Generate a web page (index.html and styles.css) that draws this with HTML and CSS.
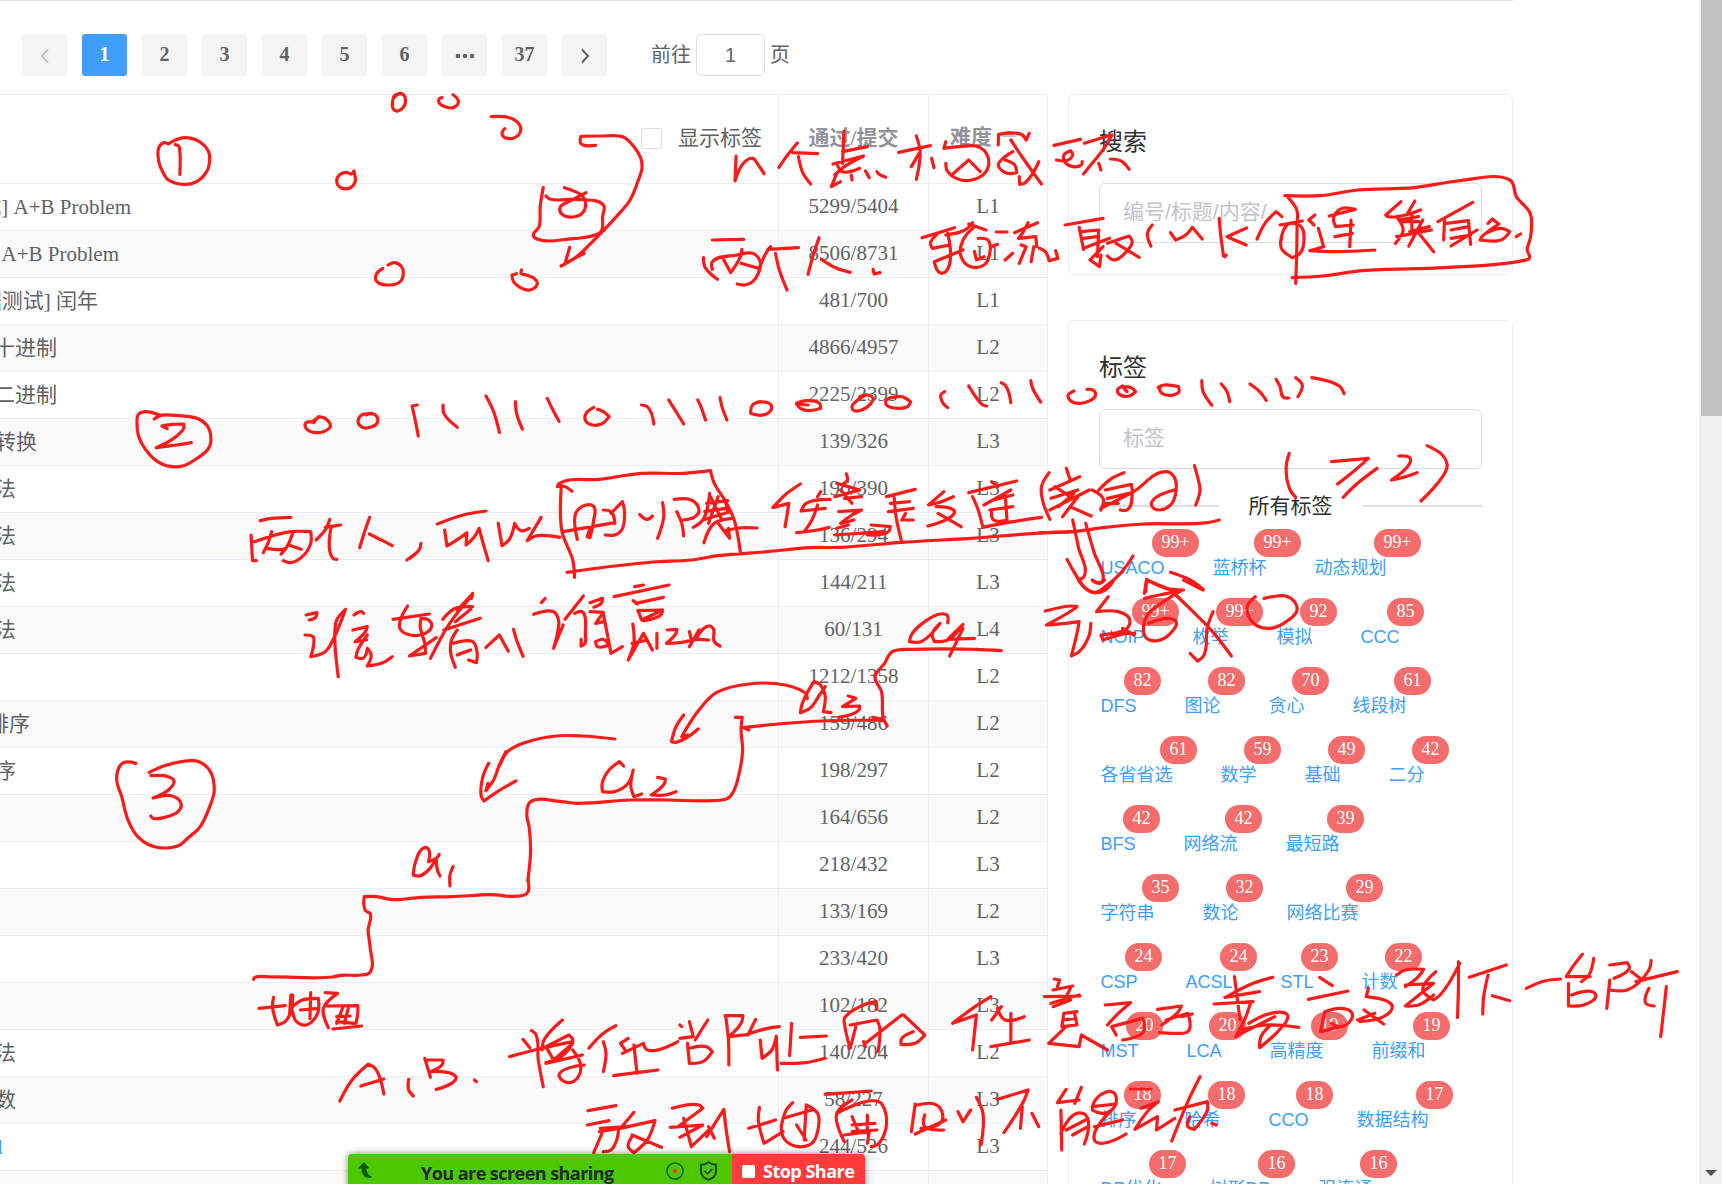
FILE: index.html
```html
<!DOCTYPE html>
<html lang="zh-CN">
<head>
<meta charset="utf-8">
<title>题库</title>
<link rel="stylesheet" href="styles.css">
</head>
<body>
<div class="page">
  <div class="content">
    <nav class="pager">
      <button class="pg off"><svg width="12" height="18" viewBox="0 0 12 18"><path d="M9 2.500L3 9l6 6.500"/></svg></button>
      <button class="pg on">1</button><button class="pg">2</button><button class="pg">3</button><button class="pg">4</button><button class="pg">5</button><button class="pg">6</button>
      <button class="pg"><svg width="20" height="6" viewBox="0 0 20 6"><g class="dots"><circle cx="3" cy="3" r="2.300"/><circle cx="10" cy="3" r="2.300"/><circle cx="17" cy="3" r="2.300"/></g></svg></button>
      <button class="pg">37</button>
      <button class="pg"><svg width="12" height="18" viewBox="0 0 12 18"><path d="M3 2.500L9 9l-6 6.500"/></svg></button>
      <span class="jump">前往<span class="jump-box">1</span>页</span>
    </nav>
    <div class="columns">
      <main class="table">
        <div class="row head"><div class="c1"><span class="check"></span>显示标签</div><div class="c2">通过/提交</div><div class="c3">难度<i class="caret"></i></div></div>
        <div class="row"><div class="c1"><span class="t e131">试] A+B Problem</span></div><div class="c2">5299/5404</div><div class="c3">L1</div></div>
        <div class="row"><div class="c1"><span class="t e119">A+B Problem</span></div><div class="c2">8506/8731</div><div class="c3">L1</div></div>
        <div class="row"><div class="c1"><span class="t e98">据测试] 闰年</span></div><div class="c2">481/700</div><div class="c3">L1</div></div>
        <div class="row"><div class="c1"><span class="t e57">十进制</span></div><div class="c2">4866/4957</div><div class="c3">L2</div></div>
        <div class="row"><div class="c1"><span class="t e57">二进制</span></div><div class="c2">2225/2399</div><div class="c3">L2</div></div>
        <div class="row"><div class="c1"><span class="t e37">转换</span></div><div class="c2">139/326</div><div class="c3">L3</div></div>
        <div class="row"><div class="c1"><span class="t e16">法</span></div><div class="c2">196/390</div><div class="c3">L3</div></div>
        <div class="row"><div class="c1"><span class="t e16">法</span></div><div class="c2">136/294</div><div class="c3">L3</div></div>
        <div class="row"><div class="c1"><span class="t e16">法</span></div><div class="c2">144/211</div><div class="c3">L3</div></div>
        <div class="row"><div class="c1"><span class="t e16">法</span></div><div class="c2">60/131</div><div class="c3">L4</div></div>
        <div class="row"><div class="c1"></div><div class="c2">1212/1358</div><div class="c3">L2</div></div>
        <div class="row"><div class="c1"><span class="t e30">排序</span></div><div class="c2">159/486</div><div class="c3">L2</div></div>
        <div class="row"><div class="c1"><span class="t e16">序</span></div><div class="c2">198/297</div><div class="c3">L2</div></div>
        <div class="row"><div class="c1"></div><div class="c2">164/656</div><div class="c3">L2</div></div>
        <div class="row"><div class="c1"></div><div class="c2">218/432</div><div class="c3">L3</div></div>
        <div class="row"><div class="c1"></div><div class="c2">133/169</div><div class="c3">L2</div></div>
        <div class="row"><div class="c1"></div><div class="c2">233/420</div><div class="c3">L3</div></div>
        <div class="row"><div class="c1"></div><div class="c2">102/182</div><div class="c3">L3</div></div>
        <div class="row"><div class="c1"><span class="t e16">法</span></div><div class="c2">140/204</div><div class="c3">L2</div></div>
        <div class="row"><div class="c1"><span class="t e16">数</span></div><div class="c2">58/227</div><div class="c3">L3</div></div>
        <div class="row"><div class="c1"><span class="t e3 link">l</span></div><div class="c2">244/526</div><div class="c3">L3</div></div>
        <div class="row"><div class="c1"></div><div class="c2"></div><div class="c3"></div></div>
      </main>
      <aside class="side">
        <section class="card search"><h2>搜索</h2><div class="field">编号/标题/内容/</div></section>
        <section class="card tags"><h2>标签</h2><div class="field">标签</div>
          <div class="divider"><span>所有标签</span></div>
          <div class="tagrow"><a>USACO<b>99+</b></a><a>蓝桥杯<b>99+</b></a><a>动态规划<b>99+</b></a></div>
          <div class="tagrow"><a>NOIP<b>99+</b></a><a>枚举<b>99+</b></a><a>模拟<b>92</b></a><a>CCC<b>85</b></a></div>
          <div class="tagrow"><a>DFS<b>82</b></a><a>图论<b>82</b></a><a>贪心<b>70</b></a><a>线段树<b>61</b></a></div>
          <div class="tagrow"><a>各省省选<b>61</b></a><a>数学<b>59</b></a><a>基础<b>49</b></a><a>二分<b>42</b></a></div>
          <div class="tagrow"><a>BFS<b>42</b></a><a>网络流<b>42</b></a><a>最短路<b>39</b></a></div>
          <div class="tagrow"><a>字符串<b>35</b></a><a>数论<b>32</b></a><a>网络比赛<b>29</b></a></div>
          <div class="tagrow"><a>CSP<b>24</b></a><a>ACSL<b>24</b></a><a>STL<b>23</b></a><a>计数<b>22</b></a></div>
          <div class="tagrow"><a>MST<b>20</b></a><a>LCA<b>20</b></a><a>高精度<b>19</b></a><a>前缀和<b>19</b></a></div>
          <div class="tagrow"><a>排序<b>18</b></a><a>哈希<b>18</b></a><a>CCO<b>18</b></a><a>数据结构<b>17</b></a></div>
          <div class="tagrow"><a>DP优化<b>17</b></a><a>树形DP<b>16</b></a><a>强连通<b>16</b></a></div>
        </section>
      </aside>
    </div>
  </div>
  <div class="scroll"><div class="thumb"></div><i class="down"></i></div>
</div>

<!-- freehand pen strokes over the page, one group per canvas tile -->
<svg class="ink" width="1722" height="1184" viewBox="0 0 1722 1184">
<g transform="scale(.38265 .33333)">
<path d="M440,432 430,428 416,440 415,485 425,515 440,540 480,553 512,546 540,515 548,480 545,455 520,424 483,413 460,419 440,432M458,434 467,438 470,455 470,523"/>
<path d="M1045,280 1030,288 1026,305 1028,328 1040,333 1054,322 1060,300 1055,285 1045,280 1030,292M1155,293 1147,298 1150,312 1165,321 1178,324 1195,315 1197,300 1184,284M1284,350 1318,350 1342,358 1360,380 1355,405 1332,416 1314,408 1313,395 1319,386"/>
<path d="M925,515 928,545 914,564 892,564 880,545 888,524 905,517 918,522 925,513M1014,795 1030,788 1048,798 1054,822 1046,845 1018,855 985,845 984,822 1000,805M1350,821 1338,825 1342,845 1370,868 1385,870 1404,852 1396,835 1375,825 1362,820 1363,810"/>
</g>
<g transform="translate(500 0) scale(.38265 .33333)">
<path d="M250,436 220,436 211,430 211,409 262,408 322,411 350,440 368,475 371,505 360,545 340,600 300,655 250,715 200,770 160,798M182,742 170,790 220,760"/>
<path d="M113,563 105,620 102,680 87,705 93,715 190,716 240,708 264,695 268,650 270,615 200,598 130,597 120,588M168,563 210,583 222,600 218,635 190,651 160,640 158,620 180,605 225,578"/>
<path d="M617,468 614,543 640,485 660,475 675,495 690,521M777,429 745,475 729,502M765,458 830,461M780,470 792,520 812,552"/>
<path d="M899,393 895,490M895,455 960,440M870,492 950,468 900,500 875,525M880,490 895,515 940,505M880,520 866,560 890,545M918,525 920,540M955,513 965,533M985,515 990,522 1008,532"/>
<path d="M1088,408 1098,455 1088,538M1042,457 1125,437M1095,460 1075,500M1128,475 1134,503M1165,425 1160,445 1200,440 1250,440 1275,470 1270,515 1240,538 1205,540 1170,515 1165,490M1185,520 1225,480 1255,515"/>
<path d="M1383,400 1375,420 1362,403 1303,403 1302,435M1340,455 1310,480 1302,495 1325,520 1350,518 1345,495 1320,480M1335,420 1370,480 1415,552M1408,485 1370,550 1358,553 1357,530"/>
<path d="M555,720 637,718M532,773 535,800 568,838M555,808 555,785 620,765 660,760 680,785 675,820 660,845 640,855 620,852M585,780 603,818 630,765 632,748M630,790 675,805"/>
<path d="M707,740 690,770 678,805M700,748 780,743M720,760 730,810 750,870M834,713 820,760 805,823M840,778 880,805 915,817M975,808 978,822 993,818"/>
<path d="M1103,713 1188,683M1145,700 1125,730 1130,745 1175,735M1170,700 1165,815 1150,818 1135,785 1210,750M1165,705 1215,690 1235,668M1225,672 1270,690M1240,680 1210,720 1205,770 1230,800 1265,795 1280,760 1275,720 1250,715M1240,755 1245,780 1265,770"/>
<path d="M1297,696 1325,696M1283,740 1300,733M1320,780 1340,760M1345,698 1405,668M1380,668 1365,700 1355,715 1400,710 1403,740M1362,735 1375,740 1357,790M1395,740 1388,785M1410,745 1425,755 1435,782 1458,775 1452,752"/>
</g>
<g transform="translate(1040 0) scale(.43495 .33333)">
<path d="M32,436 93,418M38,480 60,482 75,465 70,452 55,465 60,490 75,500 95,495 97,485M102,430 150,410 165,405 150,440 120,490 100,522M135,490 140,510M162,477 185,482 205,508"/>
<path d="M58,675 145,655M90,682 100,748M95,695 135,690 132,770M100,715 130,710M100,745 160,715M145,740 115,780 137,800 140,765M155,730 205,708 212,725 195,760 170,780 155,768M175,730 228,772"/>
<path d="M258,675 247,700 255,738M300,698 312,720 335,705 350,682 373,717M412,655 415,700 422,768M425,770 428,765M475,684 430,710 474,735M499,717 520,665 543,635 556,650M552,675 603,663M560,690 555,745 580,773 598,760 607,710 600,680 575,670 560,690"/>
<path d="M563,587 645,587 730,570 860,563 960,543 1080,540 1095,590 1127,640 1128,710 1120,750 1125,775 1110,782 930,803 740,812 650,828 580,833M570,592 590,628 591,680 588,850"/>
<path d="M632,645 618,660 630,675M640,685 652,740 620,752 680,755 770,750M665,648 725,628 695,625 675,655 680,680 720,675M678,710 718,700M715,660 712,740"/>
<path d="M830,605 795,645 800,650 875,630M862,603 845,640M825,660 870,650M820,650 835,690 817,730M835,665 872,665M850,695 895,680M855,640 855,700M820,710 900,690M865,690 905,755M880,660 848,738"/>
<path d="M995,607 915,665M930,660 928,720M935,670 985,662 990,733M945,690 985,680M945,738 1005,690M945,715 990,705M1030,670 1040,657 1055,672 1015,712 1012,720 1060,720 1080,695 1060,685 1025,700M1095,710 1105,702"/>
</g>
<g transform="translate(0 290) scale(.38265 .33333)">
<path d="M403,387 420,376 455,376 515,385 540,405 551,440 545,475 515,505 478,528 438,528 412,515 380,478 362,438 358,400 362,373 378,365 415,374M437,416 423,408 450,403 480,402 480,415 450,448 408,473 460,465 500,458"/>
<path d="M833,380 815,395 800,398 800,415 820,427 845,425 863,410 855,390 835,381 820,398M968,372 945,375 936,398 950,413 968,412 985,400 985,380 970,370 958,375M1090,345 1077,348 1085,390 1093,438M1158,345 1160,370 1195,412M1270,318 1290,365 1305,427M1347,335 1350,370 1365,417M1430,325 1445,360 1461,394"/>
<path d="M680,692 710,685 760,682M656,735 660,812 670,812M665,755 760,725 812,725 812,760 790,800 760,818 740,812M710,725 700,760 688,788M697,775 740,778 745,775M765,730 750,770 735,792M755,765 787,778"/>
<path d="M862,688 850,720 826,750M850,712 890,705M865,715 870,805 880,808M966,682 950,735 940,773M965,732 1000,752 1025,767M1100,760 1095,780 1063,810"/>
<path d="M1143,702 1210,675 1270,663M1162,720 1168,768 1200,745 1220,728 1218,765 1240,740 1252,715 1265,770 1276,812M1302,700 1312,767 1330,750 1345,700 1362,722 1383,715M1414,682 1378,752 1400,738 1430,737 1463,742"/>
</g>
<g transform="translate(500 290) scale(.38265 .33333)">
<path d="M245,352 225,370 223,390 235,403 265,402 285,380 270,365 255,358M370,345 385,350 402,402M441,330 460,365 480,402M517,330 525,350 537,390M575,323 580,350 593,390M680,335 660,345 655,370 680,376 700,370 710,350 700,338 675,336"/>
<path d="M775,340 800,332 835,340 838,355 810,362 785,355 775,342 805,345M955,315 935,330 920,350 925,362 945,360 970,340 975,325 960,315 940,320M1040,320 1010,330 1010,345 1040,355 1065,350 1073,335 1050,320 1030,322M1162,305 1152,315 1158,340 1170,353M1225,288 1240,315 1262,345 1272,348M1310,278 1320,285 1335,338M1387,272 1392,295 1413,336"/>
<path d="M188,604 165,588 150,590 155,580 260,568 370,550 480,550 550,542 560,580 590,635 612,690 628,785M160,590 162,725 190,810 195,862M175,847 300,828 400,816 500,810 570,797 700,785 810,773 890,772 1050,757 1230,745 1400,730 1500,725"/>
<path d="M202,748 195,690 200,665 225,645 245,650 245,690 235,743 228,740 235,715M165,725 300,698M270,660 290,665 300,700M290,670 320,635 325,660 318,720 300,735 275,735M365,673 385,688 398,678M425,638 428,680 412,745"/>
<path d="M455,628 500,630 520,660 510,680 478,690M462,665 475,700 480,738M548,610 530,690 505,712M540,640 595,632M535,665 590,655M530,690 600,665M550,620 580,690M570,620 545,700M533,758 560,700 605,685M570,700 600,745 597,715M590,640 595,660M590,722 625,714 672,714"/>
<path d="M785,582 750,610 713,653 755,640M755,640 745,710M830,620 838,605M863,628 800,640 787,663 850,655M830,645 815,690 797,722M775,728 830,720 860,712"/>
<path d="M905,552 908,570 895,585M875,620 940,600M880,580 940,600M890,600 920,640M900,625 945,620M885,665 945,660 920,675 890,700 925,690M875,735 940,730 1000,725M880,715 910,705M970,705 1020,710 1015,725 960,735"/>
<path d="M1010,620 1085,598M1030,620 1035,680 1050,757M1020,640 1070,635M1015,665 1080,655M1060,670 1050,690 1080,690M1160,605 1120,645 1140,640 1185,620M1140,650 1185,660 1187,670 1118,708M1145,670 1205,710"/>
<path d="M1225,608 1350,573M1235,620 1248,655 1262,712 1340,695 1415,682M1285,575 1300,590M1265,645 1335,600M1290,630 1340,615M1280,660 1340,650M1320,610 1325,690 1290,690 1285,660"/>
<path d="M1435,548 1415,590 1420,640 1437,688M1480,535 1490,570M1437,600 1515,560M1440,625 1510,600M1450,590 1490,620M1437,660 1540,600M1470,680 1510,620M1490,650 1545,678M1500,610 1460,650"/>
</g>
<g transform="translate(1040 290) scale(.43495 .33333)">
<path d="M78,303 65,315 70,332 90,340 115,332 127,318 122,300 108,298M190,288 178,300 185,315 205,318 220,305 210,293 190,290 200,305M272,292 285,285 318,290 318,308 290,315 275,300 278,288M372,272 375,305 395,346M417,282 430,305 436,335M483,282 505,305 520,331M543,268 552,290 560,322 572,324M588,263 603,285 593,320M625,263 688,288 699,311"/>
<path d="M0,728 75,725 150,712 240,702 385,698 412,690M193,548 165,565 135,600M120,600 145,625 140,660M150,600 210,583 212,610 200,660 185,660M155,625 205,610M140,655 215,605 290,545 308,560 312,610 300,645 275,660 258,650 260,630 308,600M150,640 180,640M355,527 362,560 368,600 358,645"/>
<path d="M573,490 566,530 575,600 588,622M670,515 755,505 720,545 684,582M775,535 730,580 697,622M825,498 850,503 850,520 808,570 840,560 867,548M890,467 925,495 936,530 920,570 876,633"/>
<path d="M75,690 88,770 100,862 90,868M105,700 125,790 145,870 140,878 122,873M62,808 80,850 105,895 125,908 150,890 185,850 214,798M243,905 245,868 290,895 330,900M300,847 345,870 375,898"/>
</g>
<g transform="translate(0 580) scale(.38265 .33333)">
<path d="M800,105 828,98 825,112 808,120M797,165 818,170 820,190 812,230 850,215 870,180 903,88 880,120 875,160 884,290M925,105 945,95 950,100M922,150 960,140 955,155 928,185 958,180M960,165 935,210 930,232 948,235 960,205 970,225 960,258 1000,248 1025,230"/>
<path d="M1027,118 1122,102M1065,78 1048,115 1045,145 1065,163 1105,163 1128,140 1120,120 1100,115 1098,140 1110,190 1112,220 1070,228 1140,173"/>
<path d="M1235,40 1232,55M1157,118 1190,85 1235,80M1232,45 1195,90M1230,88 1190,125M1160,150 1255,115M1125,235 1175,130 1235,45M1195,150 1180,180 1178,220 1190,262M1185,190 1235,185 1247,220 1245,248 1225,240M1200,222 1230,210 1195,225M1270,202 1305,165 1328,213M1342,148 1350,180 1367,229"/>
<path d="M1322,515 1305,555 1290,600 1270,632 1275,610M1277,550 1262,590 1258,650 1265,663 1300,635 1348,603"/>
<path d="M390,577 430,557 498,542 520,545 547,570 560,630 548,680 520,745 490,775 470,795 430,804 390,795 360,770 335,722 318,650 305,600 312,560 325,547 355,550M394,587 440,590 455,603 440,630 400,654 450,648 473,670 465,695 430,712 400,715 394,708"/>
<path d="M1148,823 1140,835 1120,845 1118,805 1108,803 1085,850 1080,885 1095,888 1120,870 1140,835 1143,870 1150,888M1184,860 1176,885 1176,918"/>
</g>
<g transform="translate(500 580) scale(.38265 .33333)">
<path d="M108,68 118,55M88,103 140,95 153,120 150,160 140,205 165,135M218,48 170,118M195,100 215,95 222,110 223,160 222,190 212,198 212,178M235,68 268,55 265,70 245,82M235,95 270,97 250,130 272,125M270,100 280,160 290,220 320,200M250,185 270,178 285,195 255,200 250,185"/>
<path d="M298,50 442,15M352,20 375,15M355,70 427,52M348,62 360,72M362,95 370,120 425,90 420,105 375,122M360,92 420,90M347,132 350,190 335,240 375,160 398,210M410,160 410,205M345,190 385,180M437,150 462,148 460,160 435,190 470,188 515,178 545,180M495,200 520,150M495,155 500,180M515,170 545,138 557,145 560,185 575,198"/>
<path d="M1170,128 1168,105 1150,102 1110,125 1075,165 1070,185 1100,185 1150,130 1130,160 1135,185 1170,180 1210,133M1210,133 1170,178 1240,175M1210,145 1175,228"/>
<path d="M1310,212 1240,208 1080,208 1025,215 1005,250 980,290 997,335 1002,415 1012,438M975,412 1003,420 840,423 700,435 637,443 650,450M615,412 633,412 630,450 634,510 625,580 610,635 595,655 555,662 440,660 340,660 200,670 160,665 80,665 70,705 76,740 80,810 77,860 73,900"/>
<path d="M803,355 800,342 745,315 650,312 565,338 520,390 490,440 475,470 490,465M480,405 460,440 448,485 460,487 518,447M850,320 835,345 810,385 785,398 790,370 820,305 835,312 845,330 850,350 845,395 865,398M910,348 930,355 895,380 940,378 938,390 885,412"/>
<path d="M323,558 312,545 285,570 267,610 268,635 300,635 335,610 348,570 342,620 350,650 370,642M412,592 432,597 430,610 395,645 430,645 460,635M300,477 215,468 145,468 60,490 20,515 0,555"/>
</g>
<g transform="translate(1040 580) scale(.43495 .33333)">
<path d="M88,0 105,25 127,38 150,30 168,5M120,0 135,10 148,0M12,93 75,78 85,80 75,90 15,135 60,130 90,125 85,160 72,228 90,215 112,170 117,130"/>
<path d="M157,50 130,95 180,95 205,115 200,145 140,165 145,180 200,160 218,160M215,165 190,145M240,55 275,45 325,32 290,60 250,100 238,140 245,175 270,182 300,160 313,125 295,115 250,130M240,40 245,0M300,30 340,80 400,160 440,228M245,0 310,35M398,95 385,140 375,230 362,243 345,220M330,0 375,30"/>
<path d="M495,50 478,75 480,110 500,138 530,145 560,130 590,95 585,65 565,48 545,48 515,55"/>
</g>
<g transform="translate(0 880) scale(.38265 .33333)">
<path d="M1380,0 1380,35 1370,45 1280,44 1180,50 1100,52 1025,59 985,50 952,50 955,92 967,100 962,150 967,200 966,278 945,285 890,286 870,291 710,291 665,293 663,298"/>
<path d="M677,385 745,377M715,352 712,380 725,435 745,425 760,395 765,345 760,345 757,400 765,380M765,380 790,360 832,355 830,400 800,435 775,425 765,395M812,338 810,415M785,390 832,385M850,338 882,340 845,385 858,443M855,378 935,377 935,400 930,430M895,385 880,430M910,385 900,430M880,410 915,408M870,447 945,438M880,425 925,430"/>
<path d="M888,663 920,600 962,553 980,565 1003,642M943,618 1003,597M1068,598 1068,630 1080,648M1110,535 1125,592M1112,540 1158,540 1155,555 1125,575 1190,588 1190,600 1140,628M1240,600 1245,605"/>
</g>
<g transform="translate(500 880) scale(.38265 .33333)">
<path d="M25,530 90,510 190,485M60,478 78,503M82,452 92,460 100,540 113,620M163,420 115,480 110,510M120,500 180,465 190,480 160,530 120,548M120,500 140,540 190,490M120,550 215,525M190,510 210,550 205,590 180,608 155,590 160,575 220,555"/>
<path d="M303,437 270,460 232,505M270,485 277,520 270,575M335,475 315,490 330,515M320,520 375,490 385,510 465,485M350,495 358,580M297,587 355,578 413,570M470,435 475,440M495,425 505,470 470,475M543,420 510,480M490,490 495,550 530,545 555,515 540,500 495,505"/>
<path d="M590,410 597,480 598,555M588,407 635,407 630,430 600,468M600,470 635,465M648,465 668,418M640,465 700,445 730,440M680,480 685,535 710,510 722,468 725,570M762,430 757,527M785,472 853,468M735,550 800,548 850,535"/>
<path d="M985,388 983,365 950,375 900,415 900,430 915,505 930,440M915,435 985,420 992,440 988,515M955,490 1050,405M950,485 955,500M1055,405 1110,465 1085,490 1048,493 1050,475 1080,455"/>
<path d="M1283,350 1235,385 1183,430 1245,405 1235,510M1310,380 1285,420M1300,385 1320,420 1370,410M1335,400 1335,490M1283,500 1383,480"/>
<path d="M230,692 303,677M228,735 285,722M262,745 330,740M270,750 245,818M260,755 310,745 305,780 290,810 270,815M350,697 315,745 405,722 385,780 350,818 335,800 345,770M345,765 422,802"/>
<path d="M450,685 520,675 530,685 465,740M445,742 530,735 470,772M480,715 500,800M500,800 550,745M540,770 585,688 590,740 600,815M545,740 560,775M650,745 720,720M678,682 675,720 690,790 740,755"/>
<path d="M765,668 748,690 740,715 735,745 745,780 780,800 815,790 830,755 830,700 800,675M740,715 815,690M775,735 800,780M800,680 795,780M850,643 970,633M920,660 880,700 900,785M880,700 990,665 1008,700 1005,760 985,795 970,800M920,710 935,750M960,705 960,760M920,735 980,730M920,755 985,750M900,765 965,755 960,790"/>
<path d="M1085,672 1075,755M1090,675 1135,672 1155,695 1150,730 1100,745M1110,705 1110,740 1160,750M1085,762 1165,720M1197,695 1210,725 1230,690M1245,652 1262,700 1257,795M1300,658 1380,630 1370,660 1317,758M1365,680 1360,745M1390,700 1408,740"/>
</g>
<g transform="translate(1040 880) scale(.43495 .33333)">
<path d="M33,297 45,300 40,320M30,330 75,318M10,350 92,348M70,325 60,350M25,370 90,345M30,380 70,360M55,400 85,395M55,400 50,440 85,435 80,405M55,420 82,415M60,440 20,490 90,500 95,465 155,510"/>
<path d="M150,375 208,368 180,400 155,435M175,465 165,440 235,415 240,430 235,460 190,480M270,388 325,378 318,395 280,435M325,410 350,402M290,420 340,400 340,455 310,460 275,458"/>
<path d="M447,290 460,420M400,372 490,365M425,352 505,335M535,292 490,310 430,350M485,365 470,420 450,470M455,465 540,410M480,430 530,400 565,400 570,410 550,450 505,503 508,470 530,435M460,450 520,435 595,442"/>
<path d="M643,292 672,317M617,358 708,333M655,395 645,455 690,440M655,395 690,385 715,395 715,420 690,440 670,430M755,325 750,350 800,365 810,380 790,410 735,425M745,390 790,432M730,420 770,400"/>
<path d="M820,285 840,270 882,268 870,290 840,320M840,315 905,310 840,378 870,375 905,345M910,275 880,330 905,360 920,345 965,250M962,245 962,320 960,412M987,292 1072,255M1030,285 1020,350 1018,402M1040,347 1080,362M1118,325 1160,303 1197,297"/>
<path d="M1247,223 1225,260 1210,290 1265,290M1273,235 1262,285 1245,305M1215,310 1215,378 1250,375 1278,350 1270,335 1222,345M1310,300 1303,385M1310,255 1350,248 1355,265 1320,295M1405,242 1400,270 1350,330 1310,330M1360,275 1385,300M1370,305 1465,275M1400,325 1393,370 1412,378M1440,320 1435,380 1427,470"/>
<path d="M60,628 40,668 90,660M95,622 80,670M48,690 50,810M48,760 85,700 105,705 102,792M60,750 105,720M75,765 110,740M120,690 125,665 145,640 165,635 175,650 165,690 145,700 120,690M165,690 125,780 140,790 198,762M125,740 190,720M120,680 175,672"/>
<path d="M208,627 255,627M232,685 272,665 250,690 218,748 270,710 268,750 310,715M368,590 345,650 303,783M310,690 385,665 385,690 355,748 340,740 345,710M395,730 405,735"/>
</g>
</svg>

<div class="share">
  <div class="share-info">
    <svg width="16" height="18" viewBox="0 0 16 18"><path fill="#0b5a06" d="M6 0l5.500 6.500H8.500c0 4 2 7 6 8.500-5 2.500-11 0-11-8.500H0z"/></svg>
    <span class="share-text">You are screen sharing</span>
    <svg class="rec" width="18" height="18" viewBox="0 0 18 18"><circle cx="9" cy="9" r="8" fill="none" stroke="#0b5a06" stroke-width="1.500"/><circle cx="9" cy="9" r="2.300" fill="#ff3b3b"/></svg>
    <svg width="19" height="20" viewBox="0 0 19 20" fill="none" stroke="#12480a"><path stroke-width="2" d="M9.500 1.200c2.300 1.700 4.800 2.500 7.500 2.600v6.400c0 4-3 7-7.500 8.700C5 17.200 2 14.200 2 10.200V3.800c2.700-.1 5.200-.9 7.500-2.600z"/><path stroke-width="1.600" d="M5.500 9.800l3 3 5-5"/></svg>
  </div>
  <div class="share-stop"><i></i>Stop Share</div>
</div>
<script src="ink.js"></script>
</body>
</html>
```
FILE: ink.js
```js
// Rounds the pen strokes: gentle bends become curves, sharp corners stay.
document.querySelectorAll('.ink path').forEach(function (path) {
  var out = path.getAttribute('d').split('M').filter(Boolean).map(function (stroke) {
    var p = stroke.trim().split(' ').map(function (s) { return s.split(',').map(Number); });
    var n = p.length;
    var tangent = p.map(function (c, i) {
      if (i === 0 || i === n - 1) return [0, 0];
      var a = [c[0] - p[i - 1][0], c[1] - p[i - 1][1]];
      var b = [p[i + 1][0] - c[0], p[i + 1][1] - c[1]];
      var la = Math.hypot(a[0], a[1]), lb = Math.hypot(b[0], b[1]);
      if (!la || !lb || (a[0] * b[0] + a[1] * b[1]) / (la * lb) < 0.15) return [0, 0];
      var dx = a[0] / la + b[0] / lb, dy = a[1] / la + b[1] / lb, l = Math.hypot(dx, dy);
      return [dx / l, dy / l];
    });
    var d = 'M' + p[0];
    for (var i = 1; i < n; i++) {
      var len = Math.hypot(p[i][0] - p[i - 1][0], p[i][1] - p[i - 1][1]) * 0.33;
      d += 'C' + (p[i - 1][0] + tangent[i - 1][0] * len) + ',' + (p[i - 1][1] + tangent[i - 1][1] * len) +
        ' ' + (p[i][0] - tangent[i][0] * len) + ',' + (p[i][1] - tangent[i][1] * len) + ' ' + p[i];
    }
    return d;
  });
  path.setAttribute('d', out.join(''));
});
```
FILE: styles.css
```css
* { box-sizing: border-box; }
body { margin: 0; height: 1184px; overflow: hidden; background: #fff; position: relative; color: #606266; font: 21px/24px "Liberation Serif", "Noto Sans CJK SC", serif; }
.page { display: flex; justify-content: space-between; height: 1184px; overflow: hidden; }
.content { width: 1513px; border-top: 1px solid #e4e4e4; }

.pager { display: flex; gap: 15px; padding: 33px 0 0 22px; height: 93px; align-items: flex-start; }
.pg { width: 45px; height: 42px; padding: 0 0 1px; border: 0; border-radius: 3px; background: #f4f4f5; color: #606266; font: bold 20px "Liberation Serif", serif; display: flex; align-items: center; justify-content: center; }
.pg svg { fill: none; stroke: #606266; stroke-width: 2; margin-top: 2px; }
.pg .dots { fill: #606266; stroke: none; }
.pg.off svg { stroke: #c0c4cc; }
.pg.on { background: #409eff; color: #fff; }
.jump { display: flex; align-items: center; height: 42px; margin-left: 29px; font-size: 20px; }
.jump-box { width: 69px; height: 42px; margin: 0 5px; border: 1px solid #dcdfe6; border-radius: 5px; display: flex; align-items: center; justify-content: center; font-family: "Liberation Sans", sans-serif; }

.columns { display: flex; gap: 20px; }
.table { width: 1048px; border-top: 1px solid #ebeef5; border-right: 1px solid #ebeef5; }
.row { display: grid; grid-template-columns: 779px 150px 118px; height: 47px; border-bottom: 1px solid #ebeef5; }
.row:nth-child(odd):not(.head) { background: #fafafa; }
.row > div { display: flex; align-items: center; justify-content: center; padding-bottom: 2px; }
.row > .c1, .row > .c2 { border-right: 1px solid #ebeef5; }
.row > .c1 { justify-content: flex-start; overflow: hidden; padding-bottom: 1px; }
.row.head { height: 89px; }
.head > .c1 { justify-content: flex-end; padding: 0 16px 2px 0; }
.head > .c2, .head > .c3 { color: #909399; font-weight: bold; }
.head > .c3 { padding-bottom: 5px; }
.check { width: 21px; height: 21px; margin-right: 16px; border: 1px solid #dcdfe6; border-radius: 3px; }
.caret { width: 0; height: 0; margin: -7px 9px 0 9px; border: 8px solid transparent; border-top: 0; border-bottom: 7px solid #c0c4cc; }
.t { display: flex; justify-content: flex-end; white-space: nowrap; flex: none; }
.link { color: #409eff; }
.e131 { width: 131px; }
.e119 { width: 119px; }
.e98 { width: 98px; }
.e57 { width: 57px; }
.e37 { width: 37px; }
.e30 { width: 30px; }
.e16 { width: 16px; }
.e3 { width: 3px; }

.side { width: 445px; }
.card { border: 1px solid #ebeef5; border-radius: 6px; padding: 30px 30px; }
.card h2 { margin: 0 0 24px; font-size: 24px; font-weight: normal; color: #303133; line-height: 34px; }
.field { display: flex; align-items: center; height: 60px; padding: 0 0 3px 23px; border: 1px solid #dcdfe6; border-radius: 6px; color: #c0c4cc; font-family: "Liberation Sans", "Noto Sans CJK SC", sans-serif; }
.search { height: 181px; margin-bottom: 45px; }
.tags { height: 900px; }
.divider { display: flex; align-items: center; gap: 30px; height: 30px; margin: 22px 0 8px; color: #303133; }
.divider span { margin-top: -1px; }
.divider::before, .divider::after { content: ""; flex: 1; height: 2px; background: #dcdfe6; }
.tagrow { display: flex; gap: 48px; height: 69px; padding: 26px 0 0 1.5px; }
.tagrow a { position: relative; height: 26px; line-height: 26px; font-size: 18px; color: #409eff; white-space: nowrap; font-family: "Liberation Sans", "Noto Sans CJK SC", sans-serif; }
.tagrow b { position: absolute; left: calc(100% - 12.5px); top: -26px; height: 28px; padding: 0 9.500px; border-radius: 14px; background: #f56c6c; color: #fff; font: normal 18px/27px "Liberation Serif", serif; }

.scroll { display: flex; flex-direction: column; justify-content: space-between; align-items: flex-end; width: 23px; background: #f0f0f0; padding-bottom: 8px; }
.thumb { width: 21px; height: 416px; background: #c1c1c1; }
.down { margin-right: 5px; border: 6px solid transparent; border-top-color: #505050; border-bottom: 0; }

.ink { position: absolute; left: 0; top: 0; }
.ink path { fill: none; stroke: #ff1a1a; stroke-width: 3.2px; stroke-linecap: round; stroke-linejoin: round; vector-effect: non-scaling-stroke; }

.share { position: absolute; left: 348px; top: 1154px; width: 517px; height: 36px; display: flex; border-radius: 4px 4px 0 0; overflow: hidden; box-shadow: 0 0 7px rgba(0,0,0,.5); font: bold 18px "Open Sans", sans-serif; }
.share-info { display: flex; align-items: center; width: 384px; padding: 0 14px 2px 10px; background: #4cc700; color: #1f2a33; }
.share-text { flex: none; width: 193px; margin: 3px 52px 0 47px; letter-spacing: -.55px; white-space: nowrap; }
.rec { margin-right: 15px; flex: none; }
.share-stop { flex: 1; display: flex; align-items: center; padding: 0 0 2px 10px; background: #ff3b3b; color: #fff; letter-spacing: -.5px; white-space: nowrap; }
.share-stop i { width: 13px; height: 13px; margin-right: 8px; border-radius: 2px; background: #fff; }
```
